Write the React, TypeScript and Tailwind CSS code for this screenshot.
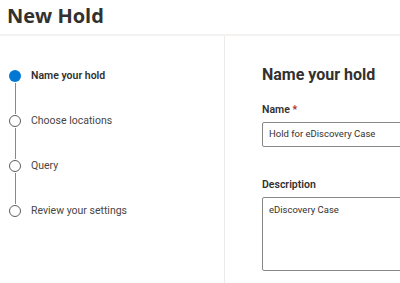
import React from "react";

const steps = [
  { label: "Name your hold", active: true },
  { label: "Choose locations", active: false },
  { label: "Query", active: false },
  { label: "Review your settings", active: false },
];

export default function App() {
  return (
    <div
      className="w-[400px] h-[283px] overflow-hidden bg-white text-[#323130]"
      style={{ fontFamily: 'Roboto, "Noto Sans", sans-serif' }}
    >
      <div className="h-[36px] pl-[7px] border-b-2 border-[#f3f2f1] flex items-center">
        <h1
          className="text-[20px] font-bold leading-none -mt-[2px]"
          style={{ fontFamily: '"Open Sans", sans-serif' }}
        >
          New Hold
        </h1>
      </div>
      <div className="flex h-[247px]">
        {/* Steps */}
        <div className="w-[225px] shrink-0 border-r border-[#edebe9] pt-[33px] pl-[9px]">
          {steps.map((step, i) => (
            <div key={step.label}>
              <div className="flex items-center h-[14px]">
                {step.active ? (
                  <span className="w-[12px] h-[12px] rounded-full bg-[#0078d4]" />
                ) : (
                  <span className="w-[12px] h-[12px] rounded-full border border-[#605e5c]" />
                )}
                <span
                  className={
                    "ml-[10px] text-[10.5px] leading-[14px] " +
                    (step.active ? "font-semibold text-[#323130]" : "text-[#484644]")
                  }
                >
                  {step.label}
                </span>
              </div>
              {i < steps.length - 1 && (
                <div className="ml-[5.5px] w-[1px] h-[31px] bg-[#8a8886]" />
              )}
            </div>
          ))}
        </div>
        {/* Form */}
        <div className="flex-1 pl-[37px] pt-[29px]">
          <h2 className="h-[20px] text-[16px] font-bold leading-[20px]">
            Name your hold
          </h2>
          <label className="block mt-[18px] h-[14px] text-[10.5px] leading-[14px] font-semibold">
            Name <span className="text-[#a4262c]">*</span>
          </label>
          <div className="mt-[5px] w-[200px] h-[25px] border border-[#8a8886] rounded-[2px] flex items-center px-[6px] text-[9.5px] whitespace-nowrap">
            Hold for eDiscovery Case
          </div>
          <label className="block mt-[31px] h-[14px] text-[10.5px] leading-[14px] font-semibold">
            Description
          </label>
          <div className="mt-[5px] w-[200px] h-[74px] border border-[#8a8886] rounded-[2px] px-[6px] pt-[6px] text-[9.5px] leading-[12px] whitespace-nowrap">
            eDiscovery Case
          </div>
        </div>
      </div>
    </div>
  );
}
